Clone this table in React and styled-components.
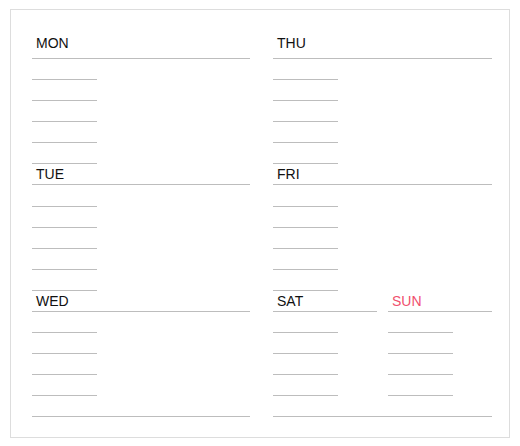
import React from 'react';
import styled, { createGlobalStyle } from 'styled-components';

const ROW = '21.08px';

const GlobalStyle = createGlobalStyle`
  body {
    margin: 0;
    background: #fff;
    font-family: 'Liberation Sans', Arial, sans-serif;
  }
`;

const Sheet = styled.div`
  box-sizing: border-box;
  width: 500px;
  height: 429px;
  margin: 9px 0 0 10px;
  border: 1px solid #dddddd;
  padding: 25px 0 0 21px;
  display: grid;
  grid-template-columns: 218px 219px;
  column-gap: 23px;
  align-items: start;
`;

const Column = styled.div`
  display: flex;
  flex-direction: column;
`;

const Header = styled.div`
  box-sizing: border-box;
  height: ${({ $first }) => ($first ? '24px' : ROW)};
  padding: ${({ $first }) => ($first ? '0 4px 7px' : '2px 4px 0')};
  line-height: 16px;
  font-size: 14px;
  color: ${({ $holiday }) => ($holiday ? '#f0506e' : '#111')};
  border-bottom: 1px solid #bdbdbd;
`;

const Line = styled.div`
  box-sizing: border-box;
  height: ${ROW};
  width: ${({ $full }) => ($full ? '100%' : '65px')};
  border-bottom: 1px solid #bdbdbd;
`;

const Weekend = styled.div`
  display: grid;
  grid-template-columns: 104px 104px;
  column-gap: 11px;
`;

const Day = ({ name, first, holiday, lines = 5 }) => (
  <Column>
    <Header $first={first} $holiday={holiday}>
      {name}
    </Header>
    {Array.from({ length: lines }).map((_, i) => (
      <Line key={i} />
    ))}
  </Column>
);

const App = () => (
  <>
    <GlobalStyle />
    <Sheet>
      <Column>
        <Day name="MON" first />
        <Day name="TUE" />
        <Day name="WED" lines={4} />
        <Line $full />
      </Column>
      <Column>
        <Day name="THU" first />
        <Day name="FRI" />
        <Weekend>
          <Day name="SAT" lines={4} />
          <Day name="SUN" holiday lines={4} />
        </Weekend>
        <Line $full />
      </Column>
    </Sheet>
  </>
);

export default App;
